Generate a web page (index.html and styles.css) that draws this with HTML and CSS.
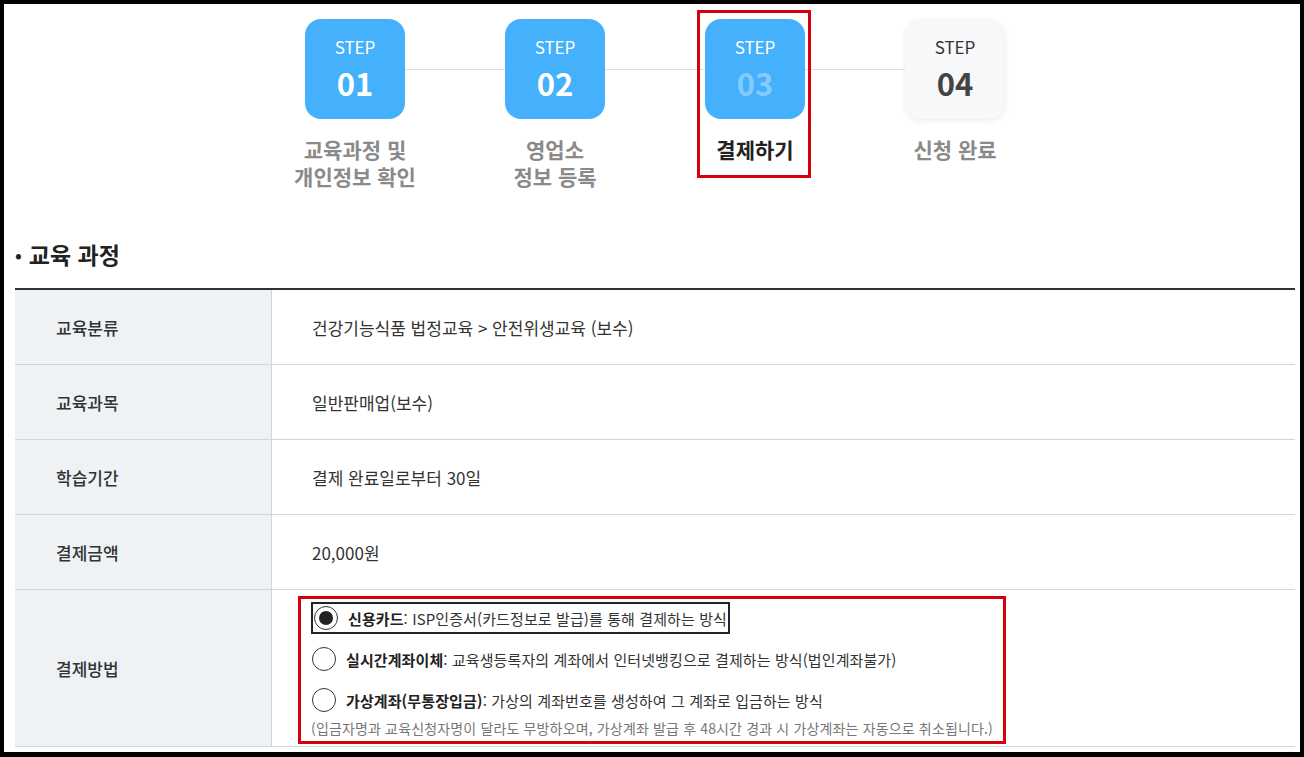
FILE: index.html
```html
<!DOCTYPE html>
<html lang="ko">
<head>
  <meta charset="UTF-8">
  <title>교육 신청 - 결제하기</title>
  <link rel="stylesheet" href="styles.css">
</head>
<body>
  <div class="frame">

    <!-- Step progress -->
    <ol class="steps">
      <li class="step done">
        <div class="step-box"><span class="step-word">STEP</span><span class="step-num">01</span></div>
        <p class="step-label">교육과정 및<br>개인정보 확인</p>
      </li>
      <li class="step done">
        <div class="step-box"><span class="step-word">STEP</span><span class="step-num">02</span></div>
        <p class="step-label">영업소<br>정보 등록</p>
      </li>
      <li class="step current">
        <div class="step-box"><span class="step-word">STEP</span><span class="step-num">03</span></div>
        <p class="step-label">결제하기</p>
      </li>
      <li class="step">
        <div class="step-box"><span class="step-word">STEP</span><span class="step-num">04</span></div>
        <p class="step-label">신청 완료</p>
      </li>
    </ol>

    <!-- Course info -->
    <h2 class="section-title">교육 과정</h2>
    <table class="info-table">
      <tr>
        <th>교육분류</th>
        <td>건강기능식품 법정교육 &gt; 안전위생교육 (보수)</td>
      </tr>
      <tr>
        <th>교육과목</th>
        <td>일반판매업(보수)</td>
      </tr>
      <tr>
        <th>학습기간</th>
        <td>결제 완료일로부터 30일</td>
      </tr>
      <tr>
        <th>결제금액</th>
        <td>20,000원</td>
      </tr>
      <tr>
        <th>결제방법</th>
        <td class="pay-cell">
          <div class="pay-options">
            <div class="pay-item focused">
              <span class="radio checked"></span>
              <span><b>신용카드</b>: ISP인증서(카드정보로 발급)를 통해 결제하는 방식</span>
            </div>
            <div class="pay-item">
              <span class="radio"></span>
              <span><b>실시간계좌이체</b>: 교육생등록자의 계좌에서 인터넷뱅킹으로 결제하는 방식(법인계좌불가)</span>
            </div>
            <div class="pay-item">
              <span class="radio"></span>
              <span><b>가상계좌(무통장입금)</b>: 가상의 계좌번호를 생성하여 그 계좌로 입금하는 방식</span>
            </div>
            <p class="pay-note">(입금자명과 교육신청자명이 달라도 무방하오며, 가상계좌 발급 후 48시간 경과 시 가상계좌는 자동으로 취소됩니다.)</p>
          </div>
        </td>
      </tr>
    </table>

  </div>
</body>
</html>
```

FILE: styles.css
```css
html, body {
  margin: 0;
  background: #000;
}
body {
  font-family: "Noto Sans CJK KR", "Noto Sans", sans-serif;
  color: #333;
}
.frame {
  margin: 4px 4px 0 4px;
  height: 748px;
  overflow: hidden;
  background: #fff;
  padding: 0 5px 0 11px;
}

/* steps */
.steps {
  position: relative;
  display: flex;
  justify-content: center;
  list-style: none;
  margin: 0;
  padding: 11px 0 0;
}
.steps::before {
  content: "";
  position: absolute;
  left: 340px;
  right: 340px;
  top: 65px;
  height: 1px;
  background: #dcdcdc;
}
.step {
  position: relative;
  width: 200px;
  display: flex;
  flex-direction: column;
  align-items: center;
}
.step-box {
  position: relative;
  width: 100px;
  height: 100px;
  margin-top: 4px;
  border-radius: 16px;
  background: #f7f8fa;
  box-shadow: 0 2px 6px rgba(0,0,0,0.08);
  display: flex;
  flex-direction: column;
  align-items: center;
  color: #333;
}
.step-word {
  font-size: 17px;
  line-height: 20px;
  margin-top: 18px;
}
.step-num {
  font-size: 31px;
  font-weight: bold;
  line-height: 30px;
  margin-top: 11px;
  color: #444;
}
.step.done .step-box,
.step.current .step-box {
  background: #45b1fd;
  box-shadow: none;
  color: #fff;
}
.step.done .step-num {
  color: #fff;
}
.step.current .step-num {
  color: #86cbff;
}
.step-label {
  margin: 17px 0 0;
  font-size: 21px;
  font-weight: bold;
  line-height: 27px;
  text-align: center;
  color: #8a8a8a;
}
.step.current .step-label {
  color: #222;
}
.step.current::after {
  content: "";
  position: absolute;
  left: 42px;
  top: -5px;
  width: 108px;
  height: 162px;
  border: 3px solid #d9000d;
}

/* section */
.section-title {
  margin: 49px 0 19px;
  font-size: 23px;
  line-height: 30px;
  font-weight: bold;
  color: #222;
}
.section-title::before {
  content: "•";
  font-size: 18px;
  margin: 0 7px 0 0;
  vertical-align: 2px;
}

/* table */
.info-table {
  width: 100%;
  border-collapse: collapse;
  border-top: 2px solid #333;
  font-size: 17px;
}
.info-table th,
.info-table td {
  height: 74px;
  padding: 0;
  border-bottom: 1px solid #d4d4d4;
  text-align: left;
  vertical-align: middle;
}
.info-table th {
  width: 215px;
  padding-left: 41px;
  background: #eff2f5;
  border-right: 1px solid #d4d4d4;
  font-weight: 500;
  color: #333;
}
.info-table td {
  padding-left: 40px;
  color: #333;
}

/* payment */
.info-table td.pay-cell {
  height: auto;
  padding: 6px 0 2px 26px;
  vertical-align: top;
}
.pay-options {
  width: 687px;
  border: 3px solid #d9000d;
  padding: 3px 5px 3px 10px;
}
.pay-item {
  display: flex;
  align-items: center;
  gap: 10px;
  height: 32px;
  margin-bottom: 9px;
  font-size: 15px;
  letter-spacing: 0.1px;
  color: #333;
}
.pay-item b {
  color: #222;
}
.pay-item.focused {
  width: 415px;
  height: 28px;
  border: 2px solid #222;
}
.radio {
  width: 22px;
  height: 22px;
  border: 1.5px solid #333;
  border-radius: 50%;
  display: flex;
  align-items: center;
  justify-content: center;
  flex-shrink: 0;
  margin-left: 1px;
}
.radio.checked::after {
  content: "";
  width: 14px;
  height: 14px;
  border-radius: 50%;
  background: #222;
}
.pay-note {
  margin: -7px 0 0;
  font-size: 14px;
  line-height: 20px;
  letter-spacing: 0.15px;
  color: #777;
}
```
